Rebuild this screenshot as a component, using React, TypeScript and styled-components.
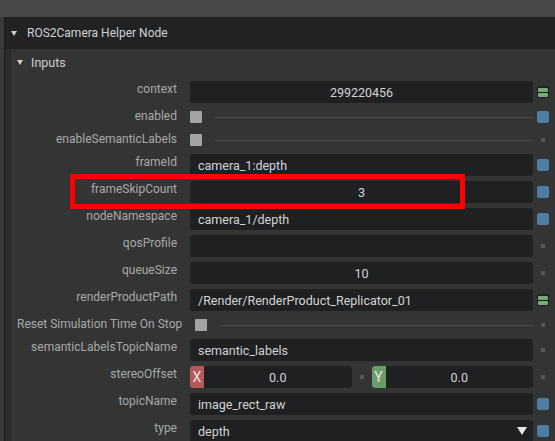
import React from "react";
import styled, { createGlobalStyle } from "styled-components";

const Global = createGlobalStyle`
  html, body { margin: 0; padding: 0; background: #3b3b3b; }
  body { font-family: Roboto, "Liberation Sans", Arial, sans-serif; }
`;

const Root = styled.div`
  position: relative;
  width: 555px;
  height: 441px;
  overflow: hidden;
  background: #3b3b3b;
  display: flex;
  flex-direction: column;
`;

const TopBand = styled.div`
  height: 17px;
  background: #484848;
  flex: none;
`;

const Body = styled.div`
  flex: 1;
  display: flex;
`;

const LeftStrip = styled.div`
  width: 4px;
  background: #3b3b3b;
  border-right: 1px solid #1c1c1c;
  flex: none;
`;

const Main = styled.div`
  flex: 1;
  display: flex;
  flex-direction: column;
  background: #2a2b2b;
`;

const NodeHeader = styled.div`
  height: 32px;
  background: #212223;
  display: flex;
  align-items: center;
  padding-left: 6px;
  gap: 10px;
  color: #d2d2d2;
  font-size: 12px;
  flex: none;
`;

const Tri = styled.span<{ $w: number; $h: number; $c?: string }>`
  display: inline-block;
  width: 0;
  height: 0;
  border-left: ${(p) => p.$w / 2}px solid transparent;
  border-right: ${(p) => p.$w / 2}px solid transparent;
  border-top: ${(p) => p.$h}px solid ${(p) => p.$c || "#d0d0d0"};
`;

const Panel = styled.div`
  margin-left: 6px;
  background: #333534;
  flex: 1;
  display: flex;
  flex-direction: column;
`;

const PanelHeader = styled.div`
  height: 27px;
  display: flex;
  align-items: center;
  padding-left: 6px;
  gap: 8px;
  color: #d0d0d0;
  font-size: 12.5px;
  flex: none;
`;

const Rows = styled.div`
  display: flex;
  flex-direction: column;
  gap: 5px;
  padding: 5px 6px 0 6px;
`;

const Row = styled.div<{ $h: number }>`
  height: ${(p) => p.$h}px;
  display: flex;
  align-items: center;
  gap: 13px;
  flex: none;
`;

const Label = styled.div`
  min-width: 160px;
  text-align: right;
  white-space: nowrap;
  color: #a9a9a9;
  font-size: 12px;
  line-height: 16px;
  align-self: flex-start;
  flex: none;
`;

const Control = styled.div`
  flex: 1;
  display: flex;
  align-items: center;
  gap: 4px;
  height: 100%;
  min-width: 0;
`;

const Field = styled.div<{ $align?: string }>`
  flex: 1;
  height: 22px;
  background: #1f2022;
  border-radius: 3px;
  display: flex;
  align-items: center;
  justify-content: ${(p) => p.$align || "center"};
  padding: 0 8px 0 8px;
  box-sizing: border-box;
  color: #d4d4d4;
  font-size: 12.5px;
  white-space: nowrap;
  overflow: hidden;
`;

const DropField = styled(Field)`
  padding-right: 6px;
`;

const CheckLine = styled.div`
  flex: 1;
  display: flex;
  align-items: center;
  gap: 13px;
`;

const Checkbox = styled.div`
  width: 12px;
  height: 12px;
  background: #a4a4a4;
  border-radius: 1px;
  flex: none;
`;

const HLine = styled.div`
  flex: 1;
  height: 1px;
  background: #4b4d4d;
`;

const IconSlot = styled.div`
  width: 12px;
  height: 12px;
  display: flex;
  align-items: center;
  justify-content: center;
  flex: none;
`;

const BlueDot = styled.div`
  width: 12px;
  height: 12px;
  border-radius: 2px;
  background: #4e7ca4;
`;

const GrayDot = styled.div`
  width: 4px;
  height: 4px;
  background: #565858;
`;

const GreenIcon = styled.div`
  width: 12px;
  height: 12px;
  border-radius: 2px;
  background: #1d221d;
  display: flex;
  flex-direction: column;
  justify-content: center;
  gap: 1px;
  padding: 1px;
  box-sizing: border-box;
`;

const GreenBar = styled.div`
  height: 4px;
  background: #76aa76;
  border-radius: 1px;
`;

const VecWrap = styled.div`
  flex: 1;
  display: flex;
  align-items: center;
  gap: 8px;
`;

const VecField = styled.div`
  flex: 1;
  height: 22px;
  background: #1f2022;
  border-radius: 3px;
  display: flex;
  align-items: center;
  overflow: hidden;
`;

const AxisTag = styled.div<{ $c: string }>`
  width: 14px;
  height: 100%;
  background: ${(p) => p.$c};
  color: #f1e4e4;
  font-size: 14px;
  display: flex;
  align-items: center;
  justify-content: center;
  flex: none;
`;

const VecValue = styled.div`
  flex: 1;
  text-align: center;
  color: #d4d4d4;
  font-size: 12.5px;
`;

const Highlight = styled.div`
  position: absolute;
  left: 70px;
  top: 174px;
  width: 395px;
  height: 35px;
  box-sizing: border-box;
  border: 5px solid #ff0000;
  pointer-events: none;
`;

type Icon = "blue" | "gray" | "green";

const RightIcon: React.FC<{ kind: Icon }> = ({ kind }) => (
  <IconSlot>
    {kind === "blue" && <BlueDot />}
    {kind === "gray" && <GrayDot />}
    {kind === "green" && (
      <GreenIcon>
        <GreenBar />
        <GreenBar />
      </GreenIcon>
    )}
  </IconSlot>
);

const FieldRow: React.FC<{ label: string; value?: string; align?: string; icon: Icon; children?: React.ReactNode }> = ({
  label,
  value,
  align,
  icon,
  children,
}) => (
  <Row $h={22}>
    <Label>{label}</Label>
    <Control>
      {children ?? <Field $align={align}>{value}</Field>}
      <RightIcon kind={icon} />
    </Control>
  </Row>
);

const CheckRow: React.FC<{ label: string; icon: Icon }> = ({ label, icon }) => (
  <Row $h={18}>
    <Label>{label}</Label>
    <Control>
      <CheckLine>
        <Checkbox />
        <HLine />
      </CheckLine>
      <RightIcon kind={icon} />
    </Control>
  </Row>
);

export default function App() {
  return (
    <Root>
      <Global />
      <TopBand />
      <Body>
        <LeftStrip />
        <Main>
          <NodeHeader>
            <Tri $w={6} $h={5} />
            <span>ROS2Camera Helper Node</span>
          </NodeHeader>
          <Panel>
            <PanelHeader>
              <Tri $w={7} $h={5} />
              <span>Inputs</span>
            </PanelHeader>
            <Rows>
              <FieldRow label="context" value="299220456" icon="green" />
              <CheckRow label="enabled" icon="blue" />
              <CheckRow label="enableSemanticLabels" icon="gray" />
              <FieldRow label="frameId" value="camera_1:depth" align="flex-start" icon="blue" />
              <FieldRow label="frameSkipCount" value="3" icon="blue" />
              <FieldRow label="nodeNamespace" value="camera_1/depth" align="flex-start" icon="blue" />
              <FieldRow label="qosProfile" value="" icon="gray" />
              <FieldRow label="queueSize" value="10" icon="gray" />
              <FieldRow
                label="renderProductPath"
                value="/Render/RenderProduct_Replicator_01"
                align="flex-start"
                icon="green"
              />
              <CheckRow label="Reset Simulation Time On Stop" icon="gray" />
              <FieldRow label="semanticLabelsTopicName" value="semantic_labels" align="flex-start" icon="gray" />
              <FieldRow label="stereoOffset" icon="gray">
                <VecWrap>
                  <VecField>
                    <AxisTag $c="#b45a5a">X</AxisTag>
                    <VecValue>0.0</VecValue>
                  </VecField>
                  <GrayDot />
                  <VecField>
                    <AxisTag $c="#6b9d6b">Y</AxisTag>
                    <VecValue>0.0</VecValue>
                  </VecField>
                </VecWrap>
              </FieldRow>
              <FieldRow label="topicName" value="image_rect_raw" align="flex-start" icon="blue" />
              <FieldRow label="type" icon="blue">
                <DropField $align="space-between">
                  <span>depth</span>
                  <Tri $w={10} $h={8} $c="#e6e6e6" />
                </DropField>
              </FieldRow>
            </Rows>
          </Panel>
        </Main>
      </Body>
      <Highlight />
    </Root>
  );
}
